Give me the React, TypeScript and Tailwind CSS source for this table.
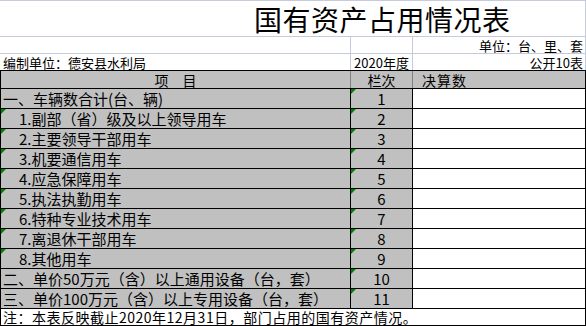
const rows = [
  { label: "一、车辆数合计(台、辆)", no: "1", indent: false, mark: false },
  { label: "1.副部（省）级及以上领导用车", no: "2", indent: true, mark: true },
  { label: "2.主要领导干部用车", no: "3", indent: true, mark: true },
  { label: "3.机要通信用车", no: "4", indent: true, mark: true },
  { label: "4.应急保障用车", no: "5", indent: true, mark: true },
  { label: "5.执法执勤用车", no: "6", indent: true, mark: true },
  { label: "6.特种专业技术用车", no: "7", indent: true, mark: true },
  { label: "7.离退休干部用车", no: "8", indent: true, mark: true },
  { label: "8.其他用车", no: "9", indent: true, mark: true },
  { label: "二、单价50万元（含）以上通用设备（台，套）", no: "10", indent: false, mark: false },
  { label: "三、单价100万元（含）以上专用设备（台，套）", no: "11", indent: false, mark: false },
];

const Mark = () => (
  <span className="absolute left-0 top-0 h-0 w-0 border-t-[5px] border-r-[5px] border-t-[#008000] border-r-transparent" />
);

export default function App() {
  return (
    <div className="w-[586px] h-[326px] bg-white text-black font-['Noto_Sans_CJK_SC',sans-serif] overflow-hidden">
      {/* title */}
      <div className="h-[37px] border-t border-b border-[#c5cbdc] border-r flex items-end pl-[254px] pb-[3px]">
        <span className="text-[28px] leading-none tracking-[0.5px]">国有资产占用情况表</span>
      </div>
      <div className="h-[17px] flex border-b border-[#c5cbdc] text-[13px] leading-none">
        <div className="w-[351px] border-r border-[#c5cbdc]" />
        <div className="w-[62px] border-r border-[#c5cbdc]" />
        <div className="w-[173px] border-r border-[#c5cbdc] flex items-end justify-end pr-[2px] pb-[1px]">单位：台、里、套</div>
      </div>
      <div className="h-[16px] flex text-[13px] leading-none">
        <div className="w-[351px] border-r border-[#c5cbdc] flex items-end pl-[3px] pb-[1px]">编制单位：德安县水利局</div>
        <div className="w-[62px] border-r border-[#c5cbdc] flex items-end justify-center pb-[1px]">2020年度</div>
        <div className="w-[173px] border-r border-[#c5cbdc] flex items-end justify-end pr-[2px] pb-[1px]">公开10表</div>
      </div>

      {/* table */}
      <div className="border-t border-l border-r border-black text-[15px] leading-none">
        <div className="h-[18px] flex border-b border-black bg-[#c0c0c0] text-[14px]">
          <div className="w-[350px] border-r border-[#808080] flex items-end justify-center pb-[1px]">项　目</div>
          <div className="w-[62px] border-r border-[#808080] flex items-end justify-center pb-[1px]">栏次</div>
          <div className="flex-1 flex items-end pl-[9px] pb-[1px] tracking-[1px]">决算数</div>
        </div>
        {rows.map((r) => (
          <div key={r.no} className="h-[20px] flex border-b border-black">
            <div
              className={`relative w-[350px] border-r border-black bg-[#c0c0c0] flex items-end pb-[2px] whitespace-nowrap ${
                r.indent ? "pl-[18px]" : "pl-[2px]"
              }`}
            >
              {r.mark && <Mark />}
              {r.label}
            </div>
            <div className="relative w-[62px] border-r border-black bg-[#c0c0c0] flex items-end justify-center pb-[2px]">
              <Mark />
              {r.no}
            </div>
            <div className="flex-1 bg-white" />
          </div>
        ))}
        <div className="h-[17px] flex items-end border-b border-black pl-[2px] pb-[1px] whitespace-nowrap text-[14px] tracking-[0.5px]">
          注：本表反映截止2020年12月31日，部门占用的国有资产情况。
        </div>
      </div>
    </div>
  );
}
